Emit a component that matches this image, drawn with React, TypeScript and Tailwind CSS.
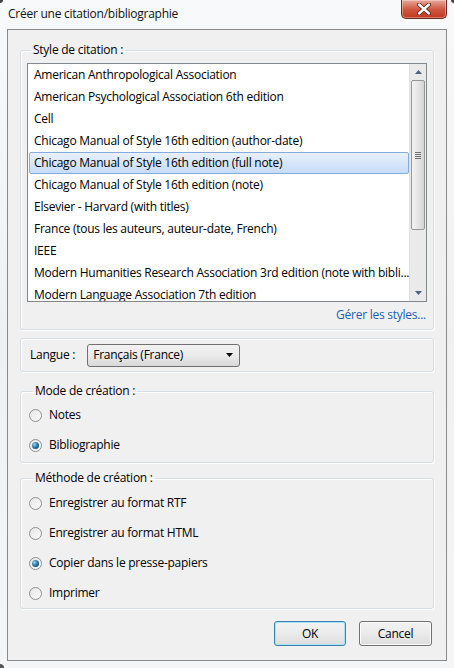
import { useState } from 'react';

const styles = [
  'American Anthropological Association',
  'American Psychological Association 6th edition',
  'Cell',
  'Chicago Manual of Style 16th edition (author-date)',
  'Chicago Manual of Style 16th edition (full note)',
  'Chicago Manual of Style 16th edition (note)',
  'Elsevier - Harvard (with titles)',
  'France (tous les auteurs, auteur-date, French)',
  'IEEE',
  'Modern Humanities Research Association 3rd edition (note with bibli...',
  'Modern Language Association 7th edition',
];

function Radio({ label, checked, onClick }: { label: string; checked: boolean; onClick: () => void }) {
  return (
    <button onClick={onClick} className="flex items-center h-[30px] text-left">
      <span className="w-[13px] h-[13px] rounded-full border border-[#8e8f8f] bg-gradient-to-br from-[#e6e6e6] to-[#fbfbfb] flex items-center justify-center">
        {checked && (
          <span className="w-[7px] h-[7px] rounded-full bg-[radial-gradient(circle_at_35%_35%,#8fd4f5,#1d6a96_55%,#0c3e5c)]" />
        )}
      </span>
      <span className="ml-[7px]">{label}</span>
    </button>
  );
}

function Group({ title, children, className = '' }: { title?: string; children: React.ReactNode; className?: string }) {
  return (
    <fieldset
      className={`min-w-0 border border-[#d5dfe5] rounded-[3px] shadow-[inset_1px_1px_0_#fff,1px_1px_0_#fff] ${className}`}
    >
      {title && <legend className="ml-[4px] px-[2px] leading-[16px]">{title}</legend>}
      {children}
    </fieldset>
  );
}

export default function App() {
  const [selected, setSelected] = useState(4);
  const [mode, setMode] = useState('Bibliographie');
  const [method, setMethod] = useState('Copier dans le presse-papiers');

  return (
    <div
      className="w-[454px] h-[668px] relative bg-gradient-to-b from-[#f7f9fb] via-[#eef0f2] to-[#f4f5f6] text-[12px] tracking-[-0.25px] text-black"
      style={{ fontFamily: '"Open Sans", "Noto Sans", sans-serif' }}
    >
      {/* window corners */}
      <div className="absolute left-0 top-0 w-[3px] h-[3px] bg-[#444] rounded-br-full" />
      <div className="absolute right-0 top-0 w-[3px] h-[3px] bg-[#444] rounded-bl-full" />
      <div className="absolute left-0 bottom-0 w-[4px] h-[4px] bg-[#555] rounded-tr-full" />

      {/* Title bar */}
      <div className="h-[29px] flex items-start">
        <span className="pl-[8px] pt-[6px] leading-[16px] text-[#111]">Créer une citation/bibliographie</span>
        <button className="ml-auto mr-[7px] w-[46px] h-[19px] rounded-b-[5px] border border-t-0 border-[#6b2a22] bg-gradient-to-b from-[#e9a99a] via-[#cf5a43] to-[#c1361c] shadow-[inset_0_0_0_1px_rgba(255,255,255,0.35)] flex items-center justify-center">
          <svg width="14" height="12" viewBox="0 0 14 12">
            <path d="M2 1.5 L12 10.5 M12 1.5 L2 10.5" stroke="#4a1a12" strokeWidth="4" strokeLinecap="round" />
            <path d="M2 1.5 L12 10.5 M12 1.5 L2 10.5" stroke="#fff" strokeWidth="2.4" strokeLinecap="round" />
          </svg>
        </button>
      </div>

      {/* Client area */}
      <div className="mx-[7px] h-[632px] border border-[#8a8a8a] bg-[#f0f0f0] px-[12px] pt-[12px] flex flex-col">
        <Group title="Style de citation :" className="px-[6px] pb-[1px]">
          <div className="mt-[5px] h-[239px] border border-[#828790] bg-white flex">
            <div className="flex-1 min-w-0 pl-[1px] pt-[0px] overflow-hidden">
              {styles.map((s, i) => (
                <div
                  key={s}
                  onClick={() => setSelected(i)}
                  className={`h-[22px] flex items-center pl-[4px] whitespace-nowrap rounded-[2px] border ${
                    i === selected
                      ? 'border-[#84acdd] bg-gradient-to-b from-[#e8f1fd] to-[#c6dcf8]'
                      : 'border-transparent'
                  }`}
                >
                  {s}
                </div>
              ))}
            </div>
            {/* Scrollbar */}
            <div className="w-[17px] shrink-0 bg-[#eaeaea] border-l border-[#e0e0e0] flex flex-col">
              <div className="h-[16px] flex items-center justify-center">
                <svg width="7" height="4" viewBox="0 0 7 4"><path d="M0 4 L3.5 0 L7 4Z" fill="#4d6185" /></svg>
              </div>
              <div className="h-[150px] mx-[1px] rounded-[2px] border border-[#979797] bg-gradient-to-r from-[#f2f2f2] via-[#e6e6e6] to-[#d4d4d4] flex items-center justify-center">
                <div className="flex flex-col gap-[1px]">
                  <div className="w-[6px] h-[1px] bg-[#6f6f6f]" />
                  <div className="w-[6px] h-[1px] bg-[#6f6f6f]" />
                  <div className="w-[6px] h-[1px] bg-[#6f6f6f]" />
                  <div className="w-[6px] h-[1px] bg-[#6f6f6f]" />
                </div>
              </div>
              <div className="mt-auto h-[17px] flex items-center justify-center">
                <svg width="7" height="4" viewBox="0 0 7 4"><path d="M0 0 L3.5 4 L7 0Z" fill="#4d6185" /></svg>
              </div>
            </div>
          </div>
          <div className="flex justify-end h-[26px] items-center">
            <a className="text-[#1e5fb4] mr-[1px] cursor-pointer">Gérer les styles...</a>
          </div>
        </Group>

        <Group className="mt-[8px] h-[34px] flex items-center px-[9px]">
          <div className="flex items-center h-[32px]">
            <span>Langue :</span>
            <div className="ml-[12px] w-[153px] h-[23px] rounded-[3px] border border-[#707070] bg-gradient-to-b from-[#f2f2f2] via-[#ebebeb] to-[#d8d8d8] flex items-center pl-[5px] pr-[6px]">
              <span className="flex-1">Français (France)</span>
              <svg width="7" height="4" viewBox="0 0 7 4"><path d="M0 0 L3.5 4 L7 0Z" fill="#000" /></svg>
            </div>
          </div>
        </Group>

        <Group title="Mode de création :" className="mt-[11px] px-[8px] pb-[2px]">
          <div className="flex flex-col pt-[1px]">
            {['Notes', 'Bibliographie'].map(r => (
              <Radio key={r} label={r} checked={mode === r} onClick={() => setMode(r)} />
            ))}
          </div>
        </Group>

        <Group title="Méthode de création :" className="mt-[7px] px-[8px] pb-[0px]">
          <div className="flex flex-col pt-[2px]">
            {[
              'Enregistrer au format RTF',
              'Enregistrer au format HTML',
              'Copier dans le presse-papiers',
              'Imprimer',
            ].map(r => (
              <Radio key={r} label={r} checked={method === r} onClick={() => setMethod(r)} />
            ))}
          </div>
        </Group>

        <div className="mt-[12px] flex justify-end gap-[13px] pr-[2px]">
          <button className="w-[72px] h-[25px] rounded-[3px] border border-[#3c7fb1] bg-gradient-to-b from-[#f2f2f2] via-[#ebebeb] to-[#dddddd] shadow-[inset_0_0_0_1px_#a8e4f7]">
            OK
          </button>
          <button className="w-[73px] h-[25px] rounded-[3px] border border-[#707070] bg-gradient-to-b from-[#f2f2f2] via-[#ebebeb] to-[#dddddd] shadow-[inset_0_0_0_1px_#fcfcfc]">
            Cancel
          </button>
        </div>
      </div>
    </div>
  );
}
